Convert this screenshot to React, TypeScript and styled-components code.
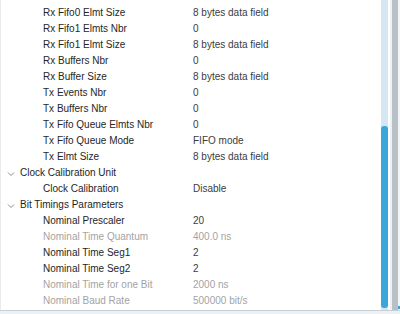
import React from "react";
import styled, { createGlobalStyle } from "styled-components";

const GlobalStyle = createGlobalStyle`
  html, body {
    margin: 0;
    padding: 0;
    background: #ffffff;
  }
  body {
    font-family: "Liberation Sans", Arial, sans-serif;
  }
`;

type Row =
  | { kind: "group"; label: string }
  | { kind: "param"; label: string; value: string; disabled?: boolean };

const rows: Row[] = [
  { kind: "param", label: "Rx Fifo0 Elmt Size", value: "8 bytes data field" },
  { kind: "param", label: "Rx Fifo1 Elmts Nbr", value: "0" },
  { kind: "param", label: "Rx Fifo1 Elmt Size", value: "8 bytes data field" },
  { kind: "param", label: "Rx Buffers Nbr", value: "0" },
  { kind: "param", label: "Rx Buffer Size", value: "8 bytes data field" },
  { kind: "param", label: "Tx Events Nbr", value: "0" },
  { kind: "param", label: "Tx Buffers Nbr", value: "0" },
  { kind: "param", label: "Tx Fifo Queue Elmts Nbr", value: "0" },
  { kind: "param", label: "Tx Fifo Queue Mode", value: "FIFO mode" },
  { kind: "param", label: "Tx Elmt Size", value: "8 bytes data field" },
  { kind: "group", label: "Clock Calibration Unit" },
  { kind: "param", label: "Clock Calibration", value: "Disable" },
  { kind: "group", label: "Bit Timings Parameters" },
  { kind: "param", label: "Nominal Prescaler", value: "20" },
  { kind: "param", label: "Nominal Time Quantum", value: "400.0 ns", disabled: true },
  { kind: "param", label: "Nominal Time Seg1", value: "2" },
  { kind: "param", label: "Nominal Time Seg2", value: "2" },
  { kind: "param", label: "Nominal Time for one Bit", value: "2000 ns", disabled: true },
  { kind: "param", label: "Nominal Baud Rate", value: "500000 bit/s", disabled: true },
];

const Window = styled.div`
  display: flex;
  flex-direction: column;
  width: 400px;
  height: 314px;
  overflow: hidden;
  background: #eef1f3;
`;

const Body = styled.div`
  display: flex;
  height: 310px;
  border-bottom: 1px solid #c6d0d5;
`;

const Panel = styled.div`
  display: flex;
  width: 390px;
  background: #ffffff;
  border-left: 1px solid #e8eaec;
  box-sizing: border-box;
`;

const List = styled.div`
  flex: 1;
  padding-top: 5px;
  font-size: 10px;
  line-height: 16px;
  overflow: hidden;
`;

const ParamRow = styled.div`
  display: grid;
  grid-template-columns: 192px 1fr;
  height: 16px;
  white-space: nowrap;
`;

const ParamLabel = styled.span<{ $disabled?: boolean }>`
  padding-left: 42px;
  color: ${(p) => (p.$disabled ? "#a3a3a3" : "#262626")};
`;

const ParamValue = styled.span<{ $disabled?: boolean }>`
  color: ${(p) => (p.$disabled ? "#a3a3a3" : "#3c3c3c")};
`;

const GroupRow = styled.div`
  display: flex;
  align-items: center;
  height: 16px;
  padding-left: 6px;
  color: #1e1e1e;
  white-space: nowrap;
`;

const Chevron = styled.svg`
  width: 8px;
  height: 6px;
  margin-right: 5px;
  margin-top: 1px;
`;

const Track = styled.div`
  display: flex;
  flex-direction: column;
  justify-content: flex-end;
  width: 7px;
  margin-right: 2px;
  padding-bottom: 2px;
  box-sizing: border-box;
  background: #d6e7f4;
`;

const Thumb = styled.div`
  height: 182px;
  border-radius: 3px;
  background: #3aa6da;
`;

const Gap = styled.div`
  width: 2px;
  background: #eef1f3;
`;

const Splitter = styled.div`
  width: 6px;
  background: #b8c1c6;
`;

const Edge = styled.div`
  flex: 1;
  display: flex;
  flex-direction: column;
  justify-content: flex-end;
  align-items: flex-end;
  background: #f3f5f6;
`;

const Dot = styled.div`
  width: 2px;
  height: 3px;
  margin-bottom: 1px;
  background: #3aa6da;
`;

export default function App() {
  return (
    <>
      <GlobalStyle />
      <Window>
        <Body>
          <Panel>
            <List>
              {rows.map((row) =>
                row.kind === "group" ? (
                  <GroupRow key={row.label}>
                    <Chevron viewBox="0 0 8 6">
                      <path d="M1 1.5 L4 4.5 L7 1.5" fill="none" stroke="#8a8a8a" strokeWidth="1" />
                    </Chevron>
                    {row.label}
                  </GroupRow>
                ) : (
                  <ParamRow key={row.label}>
                    <ParamLabel $disabled={row.disabled}>{row.label}</ParamLabel>
                    <ParamValue $disabled={row.disabled}>{row.value}</ParamValue>
                  </ParamRow>
                )
              )}
            </List>
            <Track>
              <Thumb />
            </Track>
          </Panel>
          <Gap />
          <Splitter />
          <Edge>
            <Dot />
          </Edge>
        </Body>
      </Window>
    </>
  );
}
